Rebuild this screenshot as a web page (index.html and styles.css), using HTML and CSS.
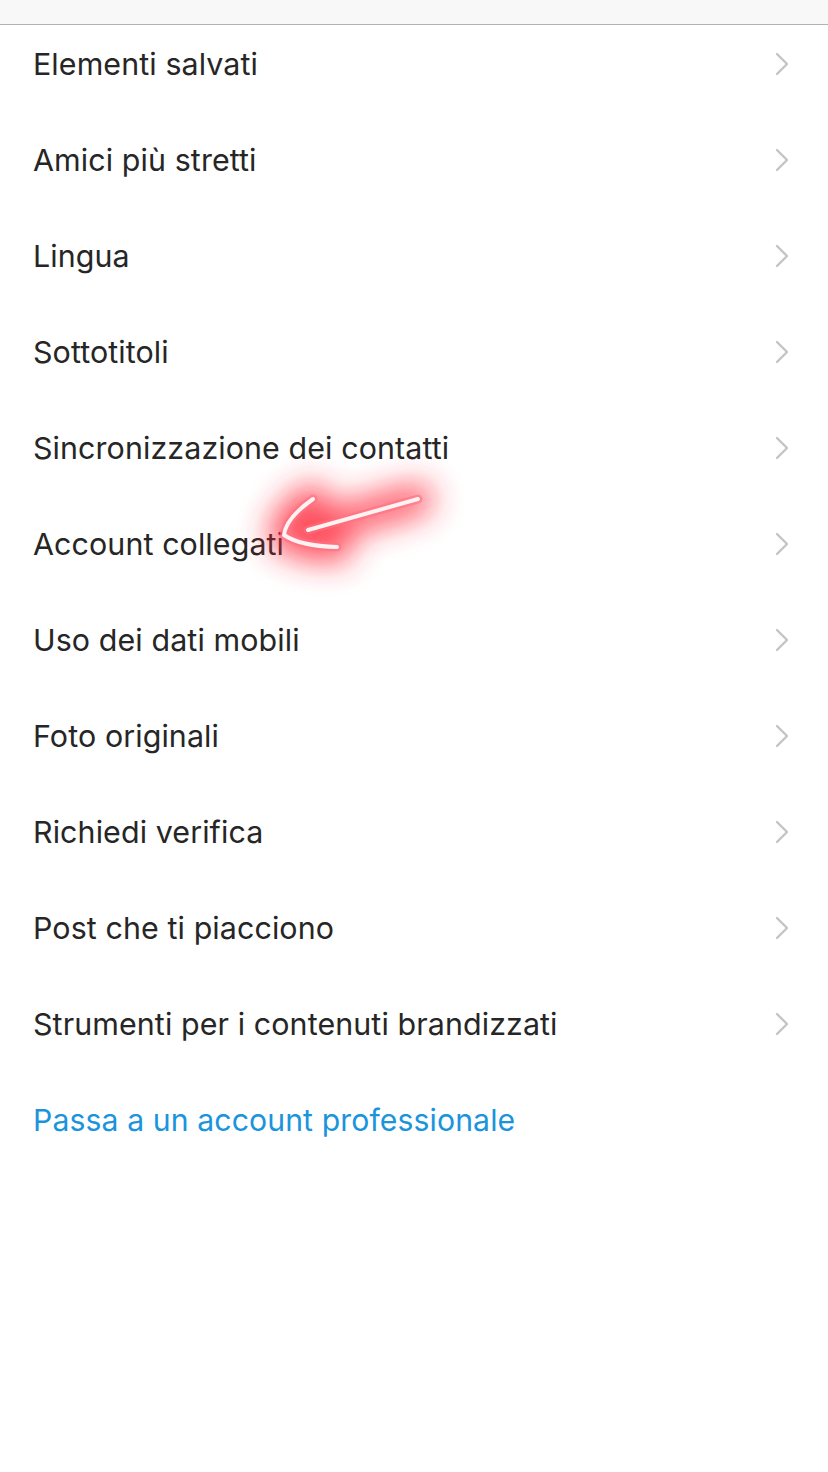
FILE: index.html
```html
<!DOCTYPE html>
<html lang="it">
<head>
<meta charset="utf-8">
<link rel="stylesheet" href="styles.css">
</head>
<body>
<div class="topbar"></div>
<ul class="menu">
  <li class="row"><span class="label">Elementi salvati</span><svg class="chev" viewBox="0 0 16 26"><path d="M3 3 L13 13 L3 23"/></svg></li>
  <li class="row"><span class="label">Amici più stretti</span><svg class="chev" viewBox="0 0 16 26"><path d="M3 3 L13 13 L3 23"/></svg></li>
  <li class="row"><span class="label">Lingua</span><svg class="chev" viewBox="0 0 16 26"><path d="M3 3 L13 13 L3 23"/></svg></li>
  <li class="row"><span class="label">Sottotitoli</span><svg class="chev" viewBox="0 0 16 26"><path d="M3 3 L13 13 L3 23"/></svg></li>
  <li class="row"><span class="label">Sincronizzazione dei contatti</span><svg class="chev" viewBox="0 0 16 26"><path d="M3 3 L13 13 L3 23"/></svg></li>
  <li class="row"><span class="label">Account collegati</span><svg class="chev" viewBox="0 0 16 26"><path d="M3 3 L13 13 L3 23"/></svg></li>
  <li class="row"><span class="label">Uso dei dati mobili</span><svg class="chev" viewBox="0 0 16 26"><path d="M3 3 L13 13 L3 23"/></svg></li>
  <li class="row"><span class="label">Foto originali</span><svg class="chev" viewBox="0 0 16 26"><path d="M3 3 L13 13 L3 23"/></svg></li>
  <li class="row"><span class="label">Richiedi verifica</span><svg class="chev" viewBox="0 0 16 26"><path d="M3 3 L13 13 L3 23"/></svg></li>
  <li class="row"><span class="label">Post che ti piacciono</span><svg class="chev" viewBox="0 0 16 26"><path d="M3 3 L13 13 L3 23"/></svg></li>
  <li class="row"><span class="label">Strumenti per i contenuti brandizzati</span><svg class="chev" viewBox="0 0 16 26"><path d="M3 3 L13 13 L3 23"/></svg></li>
  <li class="row"><span class="label link">Passa a un account professionale</span></li>
</ul>
<svg class="annot" viewBox="0 0 828 1472" width="828" height="1472">
  <defs>
    <filter id="glow" filterUnits="userSpaceOnUse" x="150" y="380" width="420" height="280">
      <feGaussianBlur stdDeviation="16"/>
    </filter>
  </defs>
  <g fill="none" stroke-linecap="round" stroke-linejoin="round">
    <g stroke="#ff2a3c" stroke-width="30" filter="url(#glow)" opacity="0.85">
      <path d="M418 499 L308 530"/>
      <path d="M313 499 Q286 518 284 535 Q300 546 337 547"/>
    </g>
    <g stroke="#ff7080" stroke-width="9" opacity="0.6">
      <path d="M418 499 L308 530"/>
      <path d="M313 499 Q286 518 284 535 Q300 546 337 547"/>
    </g>
    <g stroke="#fff2f3" stroke-width="4">
      <path d="M418 499 L308 530"/>
      <path d="M313 499 Q286 518 284 535 Q300 546 337 547"/>
    </g>
  </g>
</svg>
</body>
</html>
```
FILE: styles.css
```css
html, body {
  margin: 0;
  padding: 0;
  background: #ffffff;
}
body {
  width: 828px;
  height: 1472px;
  position: relative;
  overflow: hidden;
  font-family: Inter, "Noto Sans", "Liberation Sans", sans-serif;
}
.topbar {
  height: 24px;
  background: #f8f8f8;
  border-bottom: 1px solid #b2b2b2;
}
.menu {
  list-style: none;
  margin: 0;
  padding: 0;
}
.row {
  display: flex;
  align-items: center;
  justify-content: space-between;
  height: 38px;
  padding: 20px 38px 38px 33px;
}
.label {
  font-size: 30.4px;
  line-height: 38px;
  color: #262626;
  font-weight: 400;
  letter-spacing: 0.1px;
}
.link {
  color: #1a94dc;
  font-size: 30.2px;
}
.chev {
  width: 16px;
  height: 26px;
  fill: none;
  stroke: #c4c4c8;
  stroke-width: 2.4;
  stroke-linecap: round;
  stroke-linejoin: round;
}
.annot {
  position: absolute;
  left: 0;
  top: 0;
  pointer-events: none;
}
```
